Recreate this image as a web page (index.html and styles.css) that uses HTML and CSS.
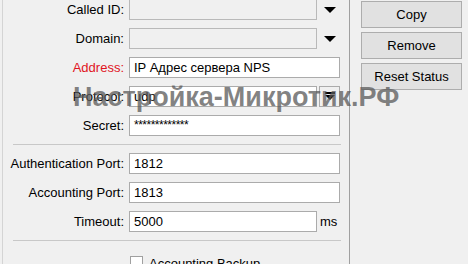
FILE: index.html
```html
<!DOCTYPE html>
<html lang="en">
<head>
    <meta charset="UTF-8">
    <title>RADIUS</title>
    <link rel="stylesheet" href="styles.css">
</head>
<body>
    <div class="window">
        <div class="form">
            <div class="row">
                <span class="label">Called ID:</span>
                <div class="field disabled combo"></div>
                <span class="drop"></span>
            </div>
            <div class="row">
                <span class="label">Domain:</span>
                <div class="field disabled combo"></div>
                <span class="drop"></span>
            </div>
            <div class="row">
                <span class="label required">Address:</span>
                <div class="field wide">IP Адрес сервера NPS</div>
            </div>
            <div class="row">
                <span class="label">Protocol:</span>
                <div class="field combo">udp</div>
                <div class="dropbtn">
                    <svg width="10" height="9" viewBox="0 0 10 9"><rect x="0" y="0" width="10" height="2" fill="#000"/><path d="M0 3 L10 3 L5 8 Z" fill="#000"/></svg>
                </div>
            </div>
            <div class="row">
                <span class="label">Secret:</span>
                <div class="field wide secret">*************</div>
            </div>
            <div class="sep"></div>
            <div class="row">
                <span class="label">Authentication Port:</span>
                <div class="field wide">1812</div>
            </div>
            <div class="row">
                <span class="label">Accounting Port:</span>
                <div class="field wide">1813</div>
            </div>
            <div class="row">
                <span class="label">Timeout:</span>
                <div class="field combo">5000</div>
                <span class="unit">ms</span>
            </div>
            <div class="sep"></div>
            <div class="row check">
                <span class="label"></span>
                <span class="box"></span>
                <span class="check-text">Accounting Backup</span>
            </div>
        </div>
        <div class="side">
            <button>Copy</button>
            <button>Remove</button>
            <button>Reset Status</button>
        </div>
        <div class="watermark">Настройка-Микротик.РФ</div>
    </div>
</body>
</html>
```

FILE: styles.css
```css
body {
    margin: 0;
    background: #f0f0f0;
    font-family: "Liberation Sans", Arial, sans-serif;
    font-size: 13px;
    color: #000;
    overflow: hidden;
}
.window {
    position: relative;
    display: flex;
    height: 264px;
}
.form {
    width: 346px;
    margin-left: 2px;
    margin-top: -1px;
    border-left: 1px solid #d4d4d4;
    border-right: 1px solid #a0a0a0;
}
.row {
    display: flex;
    align-items: center;
    height: 21px;
    margin-bottom: 8px;
}
.label {
    width: 121px;
    flex: none;
    text-align: right;
    padding-right: 5px;
}
.required {
    color: #e0141e;
}
.field {
    box-sizing: border-box;
    height: 21px;
    border: 1px solid #ababab;
    background: #fff;
    padding: 0 4px;
    line-height: 19px;
    white-space: nowrap;
    overflow: hidden;
}
.disabled {
    background: #f0f0f0;
    border-color: #b9b9b9;
}
.combo {
    width: 188px;
}
.wide {
    width: 211px;
}
.secret {
    font-size: 12px;
    letter-spacing: -0.5px;
}
.drop {
    width: 0;
    height: 0;
    margin-left: 7px;
    border-left: 6px solid transparent;
    border-right: 6px solid transparent;
    border-top: 6px solid #000;
}
.dropbtn {
    box-sizing: border-box;
    width: 21px;
    height: 21px;
    margin-left: 2px;
    border: 1px solid #ababab;
    display: flex;
    align-items: center;
    justify-content: center;
}
.unit {
    margin-left: 3px;
}
.sep {
    height: 1px;
    background: #c8c8c8;
    margin: 2px 8px 8px 10px;
}
.check {
    align-items: flex-start;
    padding-top: 7px;
}
.box {
    box-sizing: border-box;
    width: 13px;
    height: 13px;
    margin-left: 1px;
    border: 1px solid #a0a0a0;
    background: #fff;
}
.check-text {
    margin-left: 6px;
    margin-top: 0;
}
.side {
    display: flex;
    flex-direction: column;
    gap: 4px;
    padding: 1px 0 0 11px;
}
button {
    box-sizing: border-box;
    width: 101px;
    height: 27px;
    font-family: "Liberation Sans", Arial, sans-serif;
    font-size: 13px;
    color: #000;
    background: #e1e1e1;
    border: 1px solid #adadad;
    padding: 0;
}
.watermark {
    position: absolute;
    left: 73px;
    top: 82px;
    font-size: 27px;
    font-weight: bold;
    color: rgba(90, 90, 90, 0.76);
    white-space: nowrap;
}
```
